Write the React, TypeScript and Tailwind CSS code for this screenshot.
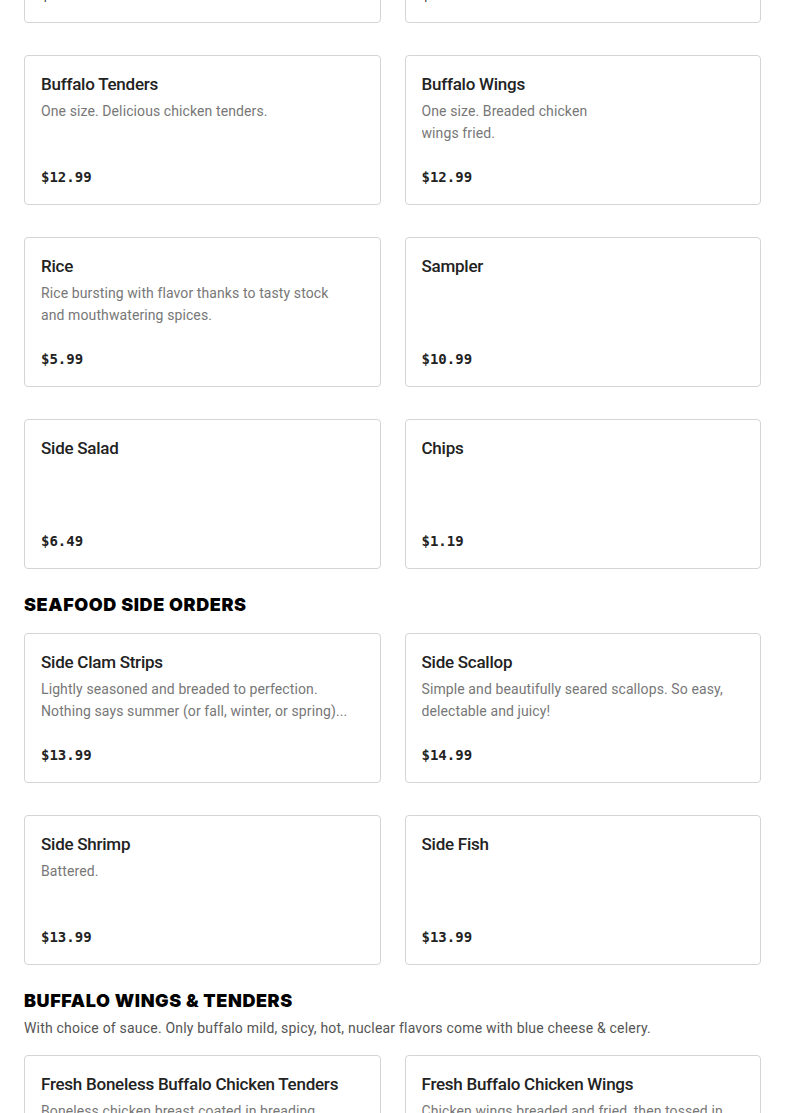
import React from 'react';

interface MenuItem {
  name: string;
  description?: string;
  price: string;
  descWidth?: string;
}

const sideOrders: MenuItem[] = [
  { name: 'Side Fries', description: 'Crispy golden fries.', price: '$3.99' },
  { name: 'Onion Rings', description: 'Beer battered onion rings.', price: '$4.99' },
  { name: 'Buffalo Tenders', description: 'One size. Delicious chicken tenders.', price: '$12.99' },
  { name: 'Buffalo Wings', description: 'One size. Breaded chicken wings fried.', price: '$12.99', descWidth: 'max-w-[190px]' },
  { name: 'Rice', description: 'Rice bursting with flavor thanks to tasty stock and mouthwatering spices.', price: '$5.99' },
  { name: 'Sampler', price: '$10.99' },
  { name: 'Side Salad', price: '$6.49' },
  { name: 'Chips', price: '$1.19' },
];

const seafoodSides: MenuItem[] = [
  {
    name: 'Side Clam Strips',
    description: 'Lightly seasoned and breaded to perfection. Nothing says summer (or fall, winter, or spring)...',
    price: '$13.99',
    descWidth: 'max-w-[322px]',
  },
  { name: 'Side Scallop', description: 'Simple and beautifully seared scallops. So easy, delectable and juicy!', price: '$14.99' },
  { name: 'Side Shrimp', description: 'Battered.', price: '$13.99' },
  { name: 'Side Fish', price: '$13.99' },
];

const wings: MenuItem[] = [
  {
    name: 'Fresh Boneless Buffalo Chicken Tenders',
    description: 'Boneless chicken breast coated in breading, fried and tossed in your choice of sauce.',
    price: '$14.99',
    descWidth: 'max-w-[282px]',
  },
  {
    name: 'Fresh Buffalo Chicken Wings',
    description: 'Chicken wings breaded and fried, then tossed in your choice of sauce.',
    price: '$15.99',
  },
];

const MenuCard = ({ item }: { item: MenuItem }) => (
  <div className="h-[150px] bg-white border border-[#d5d5d5] rounded-[4px] px-4 pt-4 pb-[17px] flex flex-col">
    <h3 className="text-[17px] leading-6 font-medium text-[#222] tracking-[-0.25px] [font-family:Roboto,sans-serif]">
      {item.name}
    </h3>
    {item.description && (
      <p
        className={
          'mt-1 text-[14px] leading-[22px] text-[#777] tracking-[0.1px] line-clamp-2 [font-family:Roboto,sans-serif] ' +
          (item.descWidth ?? 'max-w-[305px]')
        }
      >
        {item.description}
      </p>
    )}
    <div className="mt-auto text-[14px] leading-5 font-bold text-[#222] [font-family:'DejaVu_Sans_Mono',monospace]">
      {item.price}
    </div>
  </div>
);

const Grid = ({ items }: { items: MenuItem[] }) => (
  <div className="grid grid-cols-2 gap-x-6 gap-y-8">
    {items.map((item) => (
      <MenuCard key={item.name} item={item} />
    ))}
  </div>
);

export default function App() {
  return (
    <div className="min-h-screen bg-white overflow-hidden">
      <div className="px-6 -mt-[127px] pb-10">
        <Grid items={sideOrders} />

        <h2 className="mt-[22px] mb-[14px] h-7 leading-7 text-[18px] font-black uppercase text-black tracking-[0.6px] [font-family:Inter,sans-serif]">
          Seafood Side Orders
        </h2>
        <Grid items={seafoodSides} />

        <h2 className="mt-[22px] h-7 leading-7 text-[18px] font-black uppercase text-black tracking-[0.6px] [font-family:Inter,sans-serif]">
          Buffalo Wings &amp; Tenders
        </h2>
        <p className="mt-[3px] mb-[17px] text-[14px] leading-5 text-[#555] tracking-[0.2px] [font-family:Roboto,sans-serif]">
          With choice of sauce. Only buffalo mild, spicy, hot, nuclear flavors come with blue cheese &amp; celery.
        </p>
        <Grid items={wings} />
      </div>
    </div>
  );
}
